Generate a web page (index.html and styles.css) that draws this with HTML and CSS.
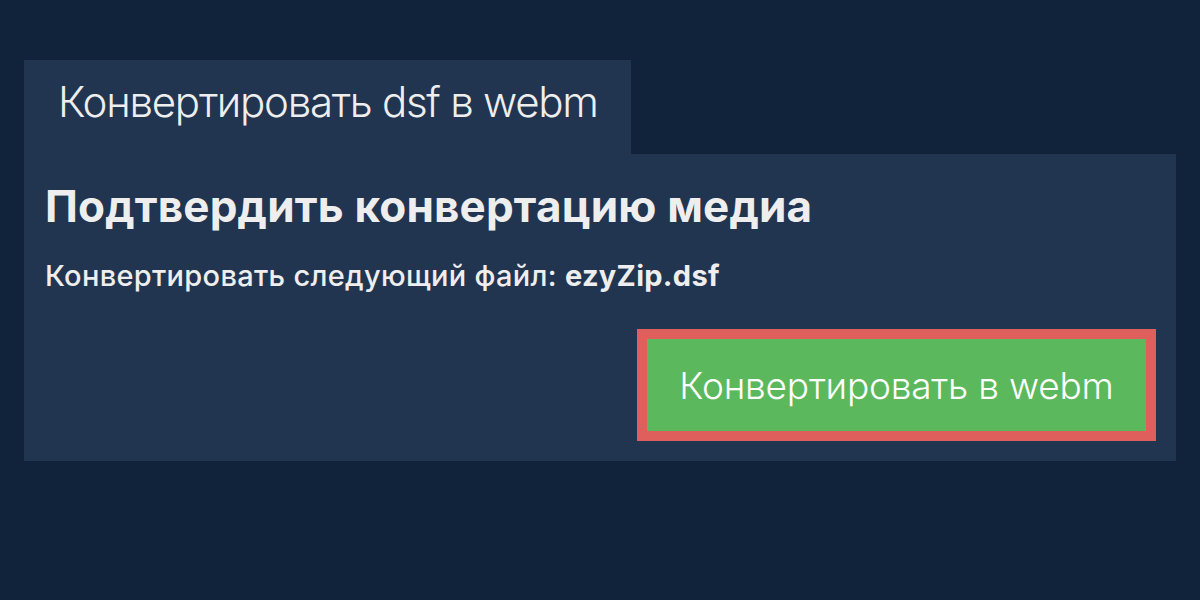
FILE: index.html
```html
<!DOCTYPE html>
<html lang="ru">
<head>
<meta charset="utf-8">
<title>Конвертировать dsf в webm</title>
<link rel="stylesheet" href="styles.css">
</head>
<body>
<div class="page">
  <div class="tab">Конвертировать dsf в webm</div>
  <div class="panel">
    <h1 class="title">Подтвердить конвертацию медиа</h1>
    <p class="subtitle">Конвертировать следующий файл: <b>ezyZip.dsf</b></p>
    <div class="actions">
      <button class="convert">Конвертировать в webm</button>
    </div>
  </div>
</div>
</body>
</html>
```

FILE: styles.css
```css
html, body {
  margin: 0;
  padding: 0;
  background: #10233a;
  font-family: Inter, "Noto Sans", sans-serif;
  color: #eeeeee;
}
.page {
  padding: 60px 24px 0;
  display: flex;
  flex-direction: column;
  align-items: flex-start;
}
.tab {
  width: 607px;
  height: 94px;
  box-sizing: border-box;
  background: #213550;
  padding-left: 34px;
  font-size: 42px;
  font-weight: 300;
  line-height: 84px;
  letter-spacing: -1.25px;
}
.panel {
  align-self: stretch;
  height: 307px;
  box-sizing: border-box;
  background: #213550;
  padding: 26px 20px 20px 21px;
  display: flex;
  flex-direction: column;
}
.title {
  margin: 0;
  font-size: 44px;
  font-weight: 700;
  line-height: 52px;
  letter-spacing: 0.18px;
}
.subtitle {
  margin: 26px 0 0;
  font-size: 29px;
  font-weight: 500;
  line-height: 36px;
  letter-spacing: 0.3px;
}
.subtitle b { font-weight: 700; }
.actions {
  margin-top: auto;
  display: flex;
  justify-content: flex-end;
}
.convert {
  width: 519px;
  height: 112px;
  box-sizing: border-box;
  background: #5cb85c;
  border: 10px solid #de5f5c;
  color: #ffffff;
  font-family: Inter, "Noto Sans", sans-serif;
  font-size: 37px;
  font-weight: 300;
  padding: 0;
  letter-spacing: -0.2px;
}
```
